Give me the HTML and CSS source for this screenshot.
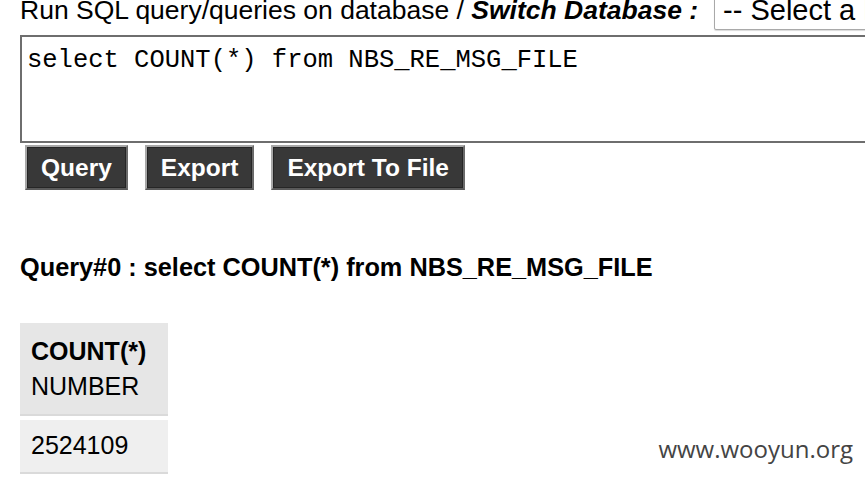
FILE: index.html
```html
<!DOCTYPE html>
<html>
<head>
<meta charset="utf-8">
<title>SQL Query</title>
<link rel="stylesheet" href="styles.css">
</head>
<body>
<div class="page">
  <form class="query-form">
    <div class="toolbar">
      <span class="label">Run SQL query/queries on database / <b><i>Switch Database :</i></b></span>
      <select class="db-select">
        <option>-- Select a Database --</option>
      </select>
    </div>
    <textarea class="sql" spellcheck="false">select COUNT(*) from NBS_RE_MSG_FILE</textarea>
    <div class="buttons">
      <button type="button" class="btn">Query</button>
      <button type="button" class="btn">Export</button>
      <button type="button" class="btn">Export To File</button>
    </div>
  </form>

  <h3 class="result-title">Query#0 : select COUNT(*) from NBS_RE_MSG_FILE</h3>

  <div class="result-row">
    <table class="result">
      <thead>
        <tr><th><b>COUNT(*)</b><br><span class="type">NUMBER</span></th></tr>
      </thead>
      <tbody>
        <tr><td>2524109</td></tr>
      </tbody>
    </table>
    <span class="watermark">www.wooyun.org</span>
  </div>
</div>
</body>
</html>
```

FILE: styles.css
```css
html {
  overflow: hidden;
}

body {
  margin: 0;
  padding: 0;
  min-height: 480px;
  background: #ffffff;
}

.page {
  font-family: "Liberation Sans", Arial, sans-serif;
  font-size: 25px;
  color: #000;
  padding: 0 0 20px 20px;
  margin-top: -10px;
}

.toolbar {
  display: flex;
  align-items: center;
  white-space: nowrap;
  height: 40px;
}

.label {
  font-size: 26.5px;
  line-height: 28px;
}

.db-select {
  appearance: none;
  -webkit-appearance: none;
  margin-left: 16px;
  font-family: "Liberation Sans", Arial, sans-serif;
  font-size: 29px;
  width: 360px;
  flex: none;
  height: 40px;
  padding: 0 8px;
  border: 1px solid #a9a9a9;
  border-radius: 2px;
  background: #fff;
  color: #000;
  box-shadow: 0 1px 1px rgba(0,0,0,0.15);
}

.sql {
  display: block;
  margin-top: 5px;
  width: 900px;
  height: 108px;
  box-sizing: border-box;
  border: 2px solid #6e6e6e;
  padding: 9px 5px 3px;
  font-family: "Liberation Mono", "Courier New", monospace;
  font-size: 25.5px;
  line-height: 30px;
  color: #000;
  resize: none;
  outline: none;
}

.buttons {
  display: flex;
  gap: 17px;
  margin: 2px 0 0 5px;
}

.btn {
  font-family: "Liberation Sans", Arial, sans-serif;
  font-size: 24.5px;
  font-weight: bold;
  color: #fff;
  background: #383838;
  height: 45px;
  padding: 0 14px;
  border: 2px solid;
  border-color: #a8a8a8 #6a6a6a #5a5a5a #a8a8a8;
  box-shadow: inset 0 0 0 1px #262626;
  border-radius: 0;
  cursor: pointer;
}

.result-title {
  font-size: 25.3px;
  font-weight: bold;
  margin: 62px 0 0 0;
  line-height: 30px;
}

.result-row {
  display: flex;
  justify-content: space-between;
  align-items: flex-end;
  margin-top: 41px;
  padding-right: 12px;
}

.result {
  border-collapse: separate;
  border-spacing: 0;
  font-size: 25px;
}

.result th {
  text-align: left;
  font-weight: normal;
  background: #e6e6e6;
  padding: 11px 22px 10px 11px;
  line-height: 35px;
  border-bottom: 2px solid #dadada;
}

.result td {
  background: #efefef;
  padding: 9px 22px 10px 11px;
  line-height: 33px;
  border-top: 4px solid #fff;
  border-bottom: 2px solid #dadada;
}

.watermark {
  font-family: "Open Sans", sans-serif;
  font-size: 24px;
  line-height: 33px;
  margin-bottom: 9px;
  color: #444;
}
```
